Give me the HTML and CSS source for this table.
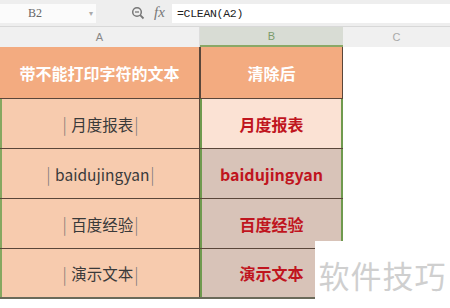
FILE: index.html
```html
<!DOCTYPE html>
<html>
<head>
<meta charset="utf-8">
<link rel="stylesheet" href="styles.css">
</head>
<body>
<div class="toolbar">
  <div class="namebox"><span class="nb-text">B2</span><span class="nb-arrow">▾</span></div>
  <div class="tools">
    <svg class="zoom-icon" width="14" height="14" viewBox="0 0 14 14"><circle cx="6" cy="6" r="4.3" fill="none" stroke="#777" stroke-width="1.5"/><line x1="4" y1="6" x2="8" y2="6" stroke="#777" stroke-width="1.3"/><line x1="9.2" y1="9.2" x2="12.5" y2="12.5" stroke="#777" stroke-width="1.8"/></svg>
    <span class="fx">fx</span>
  </div>
  <div class="formula">=CLEAN(A2)</div>
</div>
<div class="colheads">
  <div class="ch ch-a">A</div>
  <div class="ch ch-b">B</div>
  <div class="ch ch-c">C</div>
</div>
<div class="sheet">
  <div class="row head">
    <div class="cell a">带不能打印字符的文本</div>
    <div class="cell b">清除后</div>
  </div>
  <div class="row">
    <div class="cell a"><span class="pipe">|</span> 月度报表<span class="pipe">|</span></div>
    <div class="cell b light">月度报表</div>
  </div>
  <div class="row">
    <div class="cell a"><span class="pipe">|</span> baidujingyan<span class="pipe">|</span></div>
    <div class="cell b gray">baidujingyan</div>
  </div>
  <div class="row">
    <div class="cell a"><span class="pipe">|</span> 百度经验<span class="pipe">|</span></div>
    <div class="cell b gray">百度经验</div>
  </div>
  <div class="row last">
    <div class="cell a"><span class="pipe">|</span> 演示文本<span class="pipe">|</span></div>
    <div class="cell b gray">演示文本</div>
  </div>
</div>
<div class="watermark">软件技巧</div>
</body>
</html>
```
FILE: styles.css
```css
html, body {
  margin: 0;
  padding: 0;
  width: 450px;
  height: 308px;
  overflow: hidden;
  background: #ffffff;
  font-family: "Noto Sans CJK SC", "Noto Sans", sans-serif;
  position: relative;
}
.toolbar {
  height: 27px;
  background: #eeeeee;
  display: flex;
  align-items: center;
  border-bottom: 1px solid #d8d8d8;
  box-sizing: border-box;
}
.namebox {
  width: 96px;
  height: 19px;
  background: #fbfbfb;
  display: flex;
  align-items: center;
  justify-content: space-between;
  box-sizing: border-box;
  padding: 0 3px 0 28px;
  font-family: "Liberation Serif", serif;
  font-size: 12px;
  color: #666;
}
.nb-arrow {
  font-size: 8px;
  color: #aaa;
}
.tools {
  width: 76px;
  display: flex;
  align-items: center;
  padding-left: 35px;
  box-sizing: border-box;
  gap: 9px;
}
.fx {
  font-family: "Liberation Serif", serif;
  font-style: italic;
  font-size: 15px;
  color: #777;
  margin-top: -2px;
}
.formula {
  flex: 1;
  height: 19px;
  background: #ffffff;
  font-family: "Liberation Mono", monospace;
  font-size: 11.5px;
  color: #222;
  display: flex;
  align-items: center;
  padding-left: 5px;
  letter-spacing: -0.3px;
}
.colheads {
  display: flex;
  height: 20px;
  background: #f0f0f0;
  font-family: "Liberation Sans", sans-serif;
  font-size: 11px;
}
.ch {
  display: flex;
  align-items: center;
  justify-content: center;
  color: #888;
  box-sizing: border-box;
}
.ch-a { width: 200px; border-right: 1px solid #ddd; }
.ch-b { width: 143px; background: #d8dcd4; color: #7a9a6a; border-bottom: 2px solid #8aa866; }
.ch-c { flex: 1; color: #aaa; }
.sheet {
  width: 343px;
}
.row {
  display: flex;
  height: 50px;
  border-bottom: 1px solid #5a463a;
  box-sizing: border-box;
}
.row.head {
  height: 52px;
}
.cell {
  display: flex;
  align-items: center;
  justify-content: center;
  font-size: 15.5px;
  box-sizing: border-box;
  white-space: pre;
}
.cell.a {
  width: 200px;
  background: #f7cbae;
  color: #3a3a3a;
  border-left: 2px solid #86a860;
  border-right: 1px solid #5a463a;
}
.pipe {
  color: #777;
  font-weight: 300;
  font-size: 17px;
  margin: 0 1px;
}
.cell.b {
  width: 143px;
  color: #c0151e;
  font-weight: 700;
  font-size: 16px;
  border-left: 2px solid #6f9a4e;
  border-right: 2px solid #6f9a4e;
}
.row.head .cell {
  background: #f3ab80;
  color: #ffffff;
  font-weight: 700;
  font-size: 16px;
}
.row.head .cell.a {
  border-left: none;
}
.row.head .cell.b {
  border-left: 1px solid #5a463a;
  border-right: 1px solid #5a463a;
}
.cell.light { background: #fbe2d4; }
.cell.gray { background: #d8c3b8; }
.row.last {
  border-bottom: 2px solid #6a6a5a;
}
.watermark {
  position: absolute;
  left: 315px;
  top: 241px;
  width: 135px;
  height: 67px;
  background: #ffffff;
  color: #cfcfcf;
  font-size: 31px;
  display: flex;
  align-items: center;
  justify-content: center;
  letter-spacing: 1px;
  box-sizing: border-box;
}
```
